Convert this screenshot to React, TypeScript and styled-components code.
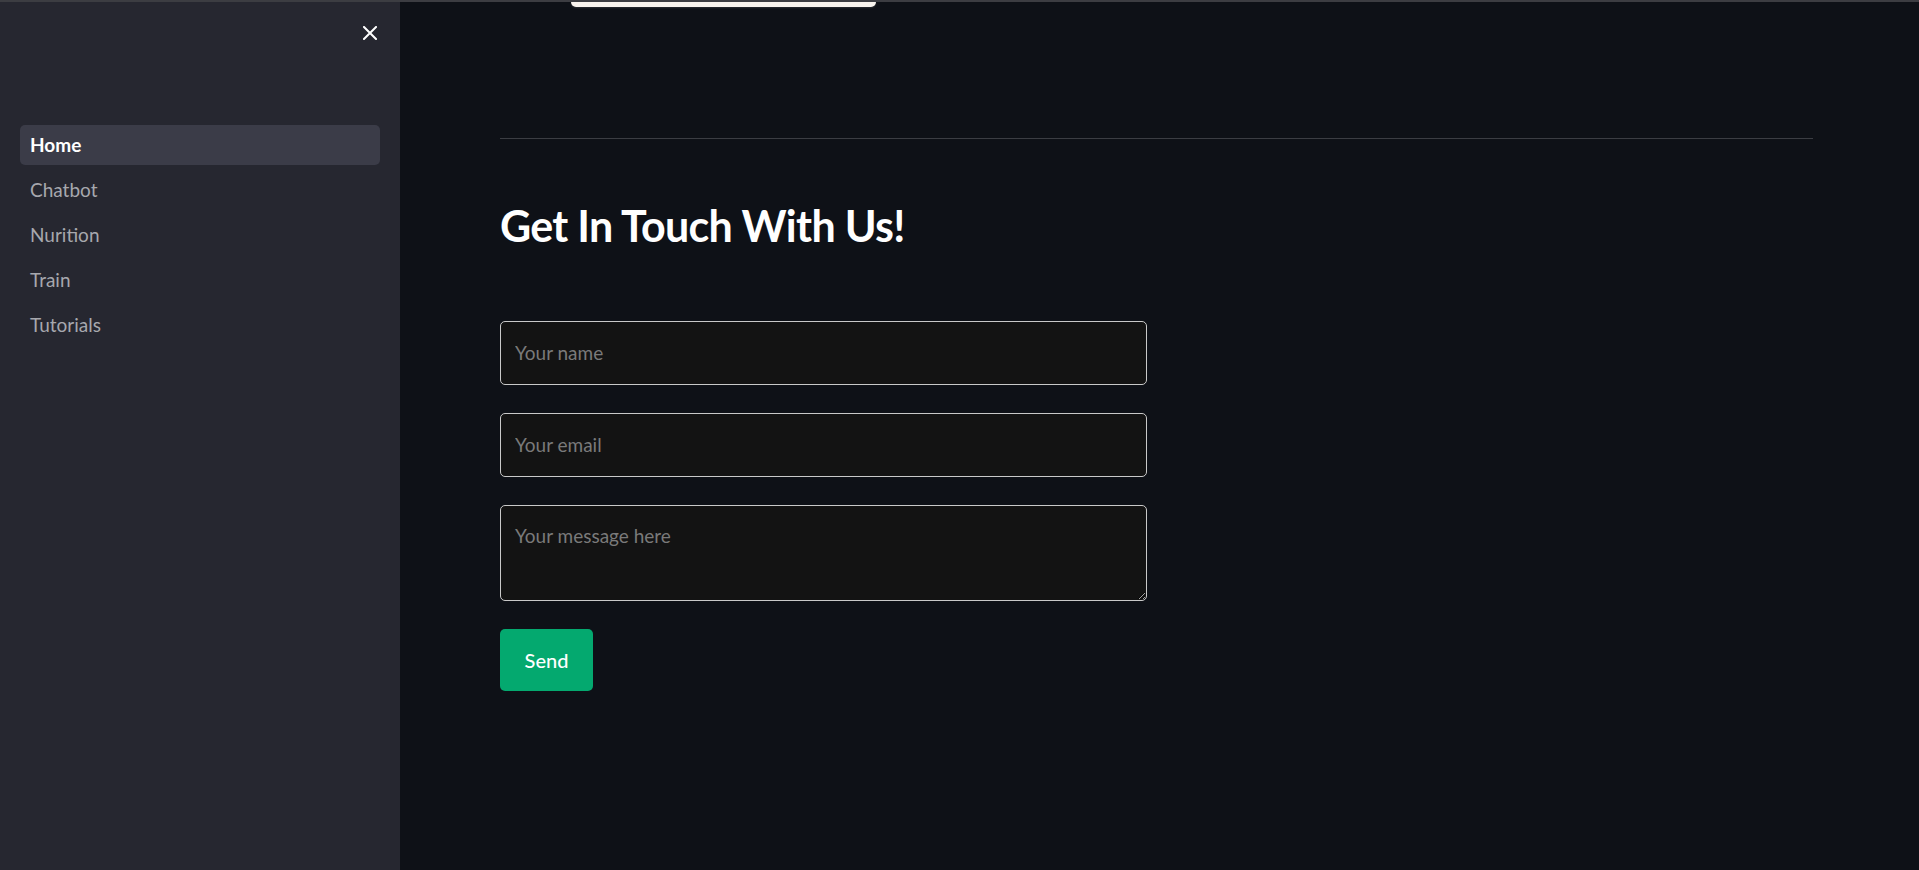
import React from "react";
import styled, { createGlobalStyle } from "styled-components";

const GlobalStyle = createGlobalStyle`
  html, body {
    margin: 0;
    padding: 0;
    background: #0e1117;
    font-family: Lato, "Noto Sans", sans-serif;
    overflow: hidden;
  }
  * { box-sizing: border-box; }
`;

const Page = styled.div`
  display: flex;
  flex-direction: column;
  height: 870px;
  width: 1919px;
`;

const TopBar = styled.div`
  height: 2px;
  background: #3c3d42;
  flex: none;
`;

const Body = styled.div`
  display: flex;
  flex: 1;
  min-height: 0;
`;

const Sidebar = styled.aside`
  width: 400px;
  flex: none;
  background: #262730;
  display: flex;
  flex-direction: column;
`;

const SidebarHeader = styled.div`
  display: flex;
  justify-content: flex-end;
  padding: 24px 23px 0 0;
  height: 123px;
`;

const CloseButton = styled.button`
  width: 14px;
  height: 14px;
  padding: 0;
  border: none;
  background: none;
  color: #ffffff;
  display: flex;
  align-items: center;
  justify-content: center;
  cursor: pointer;
`;

const Nav = styled.nav`
  display: flex;
  flex-direction: column;
  gap: 5px;
  padding: 0 20px;
`;

const NavItem = styled.a<{ $active?: boolean }>`
  display: flex;
  align-items: center;
  height: 40px;
  padding: 0 10px 2px;
  border-radius: 5px;
  font-size: 19px;
  text-decoration: none;
  font-weight: ${(p) => (p.$active ? 700 : 400)};
  color: ${(p) => (p.$active ? "#ffffff" : "#a7a8ae")};
  background: ${(p) => (p.$active ? "#3b3c48" : "transparent")};
`;

const Main = styled.main`
  flex: 1;
  padding: 0 106px 0 100px;
  display: flex;
  flex-direction: column;
`;

const Pill = styled.div`
  margin-left: 71px;
  width: 305px;
  height: 5px;
  background: #f8f3ee;
  border-radius: 0 0 10px 10px;
  box-shadow: 0 1px 2px rgba(255, 255, 255, 0.12);
`;

const Divider = styled.hr`
  margin: 131px 0 0 0;
  border: none;
  height: 1px;
  background: #3b3d43;
`;

const Heading = styled.h2`
  margin: 61px 0 0 0;
  font-size: 43px;
  line-height: 1.2;
  font-weight: 700;
  color: #ffffff;
  letter-spacing: -0.7px;
`;

const Form = styled.form`
  margin-top: 69px;
  width: 647px;
  display: flex;
  flex-direction: column;
  align-items: flex-start;
  gap: 28px;
`;

const fieldStyles = `
  width: 100%;
  background: #131313;
  border: 1px solid #c9c9c9;
  border-radius: 5px;
  color: #ffffff;
  font-family: Lato, "Noto Sans", sans-serif;
  font-size: 19px;
  outline: none;
  &::placeholder { color: #7a7a7a; }
`;

const TextInput = styled.input`
  ${fieldStyles}
  height: 64px;
  padding: 0 14px;
`;

const MessageArea = styled.textarea`
  ${fieldStyles}
  height: 96px;
  padding: 19px 14px;
  resize: vertical;
  line-height: 1.2;
`;

const SendButton = styled.button`
  width: 93px;
  height: 62px;
  border: none;
  border-radius: 5px;
  background: #04a96f;
  color: #ffffff;
  font-family: Lato, "Noto Sans", sans-serif;
  font-size: 20px;
  font-weight: 500;
  cursor: pointer;
`;

const navItems = ["Home", "Chatbot", "Nurition", "Train", "Tutorials"];

export default function App() {
  return (
    <>
      <GlobalStyle />
      <Page>
        <TopBar />
        <Body>
          <Sidebar>
            <SidebarHeader>
              <CloseButton aria-label="Close sidebar">
                <svg width="14" height="14" viewBox="0 0 14 14" fill="none">
                  <path d="M1 1L13 13M13 1L1 13" stroke="#ffffff" strokeWidth="2" strokeLinecap="square" />
                </svg>
              </CloseButton>
            </SidebarHeader>
            <Nav>
              {navItems.map((item, i) => (
                <NavItem key={item} href="#" $active={i === 0}>
                  {item}
                </NavItem>
              ))}
            </Nav>
          </Sidebar>
          <Main>
            <Pill />
            <Divider />
            <Heading>Get In Touch With Us!</Heading>
            <Form onSubmit={(e) => e.preventDefault()}>
              <TextInput type="text" placeholder="Your name" />
              <TextInput type="email" placeholder="Your email" />
              <MessageArea placeholder="Your message here" />
              <SendButton type="submit">Send</SendButton>
            </Form>
          </Main>
        </Body>
      </Page>
    </>
  );
}
